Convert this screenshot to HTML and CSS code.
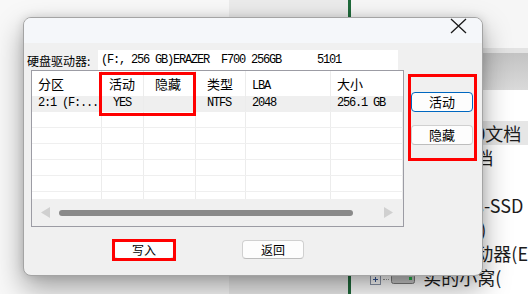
FILE: index.html
```html
<!DOCTYPE html>
<html>
  <head>
    <meta charset="utf-8">
    <title>分区属性</title>
    <link rel="stylesheet" href="styles.css">
  </head>
  <body>
    <div class="desk">
      <div class="pane-left"></div>
      <div class="pane-mid"></div>
      <div class="divider"></div>
      <div class="explorer">
        <div class="ex-top"></div>
        <div class="ex-strip"></div>
        <div class="ex-band"></div>
        <div class="ex-tree">
          <div class="ex-row ex-sel">0文档</div>
          <div class="ex-row">档</div>
          <div class="ex-row"></div>
          <div class="ex-row">s-SSD</div>
          <div class="ex-row">:)</div>
          <div class="ex-row">动器(E</div>
          <div class="ex-row ex-drive">
            <svg class="plus" width="11" height="11" viewBox="0 0 11 11">
              <rect x="0.5" y="0.5" width="10" height="10" fill="#fff" stroke="#8d97aa"/>
              <path d="M3 5.5H8M5.5 3V8" stroke="#3b5c9a" stroke-width="1"/>
            </svg>
            <span class="dots"></span>
            <svg class="disk" width="24" height="11" viewBox="0 0 24 11">
              <rect x="0.5" y="1.5" width="23" height="9" rx="2" fill="#c9c9c9" stroke="#7d7d7d"/>
              <rect x="18" y="4" width="3" height="3" fill="#27b34a"/>
            </svg>
            <span>实的小窝(</span>
          </div>
        </div>
      </div>
    </div>

    <div class="dialog">
      <div class="titlebar">
        <svg class="close" width="17" height="16" viewBox="0 0 17 16">
          <path d="M1 1L16 15M16 1L1 15" stroke="#1b1b1b" stroke-width="1.3" fill="none"/>
        </svg>
      </div>

      <div class="drive-row">
        <span class="drive-label">硬盘驱动器:</span>
        <div class="drive-field">(F:, 256 GB)ERAZER  F700 256GB      5101</div>
      </div>

      <div class="middle">
        <div class="list">
          <div class="grid">
            <div class="row head">
              <div class="c c1">分区</div>
              <div class="c c2">活动</div>
              <div class="c c3">隐藏</div>
              <div class="c c4">类型</div>
              <div class="c c5 mono">LBA</div>
              <div class="c c6">大小</div>
            </div>
            <div class="row sel mono">
              <div class="c c1">2:1 (F:...</div>
              <div class="c c2">YES</div>
              <div class="c c3"></div>
              <div class="c c4">NTFS</div>
              <div class="c c5">2048</div>
              <div class="c c6">256.1 GB</div>
            </div>
            <div class="row"><div class="c"></div><div class="c"></div><div class="c"></div><div class="c"></div><div class="c"></div><div class="c"></div></div>
            <div class="row"><div class="c"></div><div class="c"></div><div class="c"></div><div class="c"></div><div class="c"></div><div class="c"></div></div>
            <div class="row"><div class="c"></div><div class="c"></div><div class="c"></div><div class="c"></div><div class="c"></div><div class="c"></div></div>
            <div class="row"><div class="c"></div><div class="c"></div><div class="c"></div><div class="c"></div><div class="c"></div><div class="c"></div></div>
            <div class="row"><div class="c"></div><div class="c"></div><div class="c"></div><div class="c"></div><div class="c"></div><div class="c"></div></div>
            <div class="row"><div class="c"></div><div class="c"></div><div class="c"></div><div class="c"></div><div class="c"></div><div class="c"></div></div>
          </div>
          <div class="hscroll">
            <svg width="9" height="11" viewBox="0 0 9 11"><path d="M9 0V11L0 5.5Z" fill="#d0d0d0"/></svg>
            <div class="thumb"></div>
            <svg class="arrow-right" width="9" height="11" viewBox="0 0 9 11"><path d="M0 0V11L9 5.5Z" fill="#d0d0d0"/></svg>
          </div>
        </div>

        <div class="side">
          <button class="btn btn-side btn-default">活动</button>
          <button class="btn btn-side">隐藏</button>
        </div>
      </div>

      <div class="actions">
        <button class="btn btn-write">写入</button>
        <button class="btn btn-back">返回</button>
      </div>

      <div class="mark mark-cols"></div>
      <div class="mark mark-side"></div>
      <div class="mark mark-write"></div>
    </div>
  </body>
</html>
```

FILE: styles.css
```css
body {
  margin: 0;
  width: 528px;
  height: 294px;
  overflow: hidden;
  position: relative;
  font-family: "Noto Sans CJK SC", "Liberation Sans", sans-serif;
  color: #000;
}

/* desktop behind the dialog */

.desk {
  display: flex;
  height: 294px;
}

.pane-left {
  width: 233px;
  background: #f8f8f8;
}

.pane-mid {
  width: 122px;
  background: #ebebeb;
}

.divider {
  width: 3px;
  background: #1f6a3b;
}

.explorer {
  flex: 1;
  display: flex;
  flex-direction: column;
  background: #fff;
  font-size: 18px;
  color: #1c1c1c;
}

.ex-top {
  height: 48px;
  background: #f6f6f6;
}

.ex-strip {
  height: 5px;
  background: #e3e3e3;
}

.ex-band {
  height: 37px;
  background: linear-gradient(#c3c3c3, #dadada);
}

.ex-tree {
  padding-top: 31px;
}

.ex-row {
  height: 24px;
  line-height: 24px;
  padding-left: 124px;
  white-space: nowrap;
  overflow: hidden;
}

.ex-sel {
  background: #e6e6e6;
}

.ex-drive {
  display: flex;
  align-items: center;
  padding-left: 19px;
}

.ex-drive .plus {
  margin-top: 5px;
}

.dots {
  width: 6px;
  margin: 5px 2px 0 2px;
  border-top: 1px dotted #9a9a9a;
}

.disk {
  margin-top: 3px;
  margin-right: 8px;
}

/* dialog */

.dialog {
  position: absolute;
  left: 23px;
  top: 17px;
  width: 460px;
  height: 259px;
  box-sizing: border-box;
  border: 1px solid #a4a4a4;
  border-radius: 8px;
  background: #f0f0f0;
  overflow: hidden;
  box-shadow: 0 12px 28px rgba(0, 0, 0, 0.36), 0 0 10px rgba(0, 0, 0, 0.12);
}

.titlebar {
  height: 25px;
  display: flex;
  justify-content: flex-end;
  padding-right: 15px;
  background: #f5f7fa;
}

.drive-row {
  display: flex;
  align-items: center;
  height: 20px;
  margin-top: 7px;
  padding-left: 3px;
  font-size: 12px;
}

.drive-label {
  width: 71px;
}

.drive-field {
  width: 300px;
  height: 20px;
  box-sizing: border-box;
  padding-left: 3px;
  background: #fff;
  line-height: 20px;
  white-space: pre;
}

.mono,
.drive-field {
  font-family: "Liberation Mono", "DejaVu Sans Mono", monospace;
  font-size: 12px;
  letter-spacing: -1.2px;
}

.middle {
  display: flex;
  align-items: flex-start;
  padding-left: 7px;
}

.list {
  width: 373px;
  height: 157px;
  box-sizing: border-box;
  border: 1px solid #9c9ca4;
  background: #fff;
  display: flex;
  flex-direction: column;
}

.grid {
  height: 128px;
  overflow: hidden;
}

.row {
  display: grid;
  grid-template-columns: 70px 42px 52px 50px 85px 1fr;
  height: 16px;
  box-sizing: border-box;
  border-bottom: 1px solid #efefef;
  line-height: 15px;
}

.row .c {
  border-right: 1px solid #ececec;
  padding-left: 6px;
  white-space: nowrap;
  overflow: hidden;
}

.row .c6 {
  border-right: 0;
}

.row .c2,
.row .c3,
.row .c4 {
  padding-left: 11px;
}

.head {
  height: 25px;
  line-height: 25px;
  font-size: 13px;
  border-bottom: 0;
}

.head .c2 {
  padding-left: 7px;
}

.head .c5 {
  font-size: 12px;
  padding-top: 3px;
}

.sel {
  background: #efefef;
}

.hscroll {
  flex: 1;
  display: flex;
  align-items: center;
  padding-left: 9px;
  background: #f0f0f0;
}

.thumb {
  width: 294px;
  height: 6px;
  margin-left: 9px;
  border-radius: 3px;
  background: #8a8a8a;
}

.arrow-right {
  margin-left: 31px;
}

.side {
  display: flex;
  flex-direction: column;
  gap: 13px;
  margin-left: 7px;
  padding-top: 22px;
}

.btn {
  height: 20px;
  padding: 0;
  box-sizing: border-box;
  border: 1px solid #d0d0d0;
  border-bottom-color: #bdbdbd;
  border-radius: 4px;
  background: #fdfdfd;
  font-family: "Noto Sans CJK SC", sans-serif;
  color: #000;
}

.btn-side {
  width: 62px;
  font-size: 13px;
  line-height: 18px;
}

.btn-default {
  border: 1px solid #0067c0;
}

.actions {
  display: flex;
  gap: 68px;
  margin-top: 13px;
  padding-left: 90px;
}

.btn-write,
.btn-back {
  height: 19px;
  font-size: 12px;
  line-height: 17px;
}

.btn-write {
  width: 60px;
}

.btn-back {
  width: 62px;
}

/* red annotation boxes */

.mark {
  position: absolute;
  box-sizing: border-box;
  border: 3px solid #f00;
}

.mark-cols {
  left: 75px;
  top: 54px;
  width: 97px;
  height: 44px;
}

.mark-side {
  left: 384px;
  top: 56px;
  width: 69px;
  height: 87px;
}

.mark-write {
  left: 88px;
  top: 221px;
  width: 64px;
  height: 22px;
}
```
